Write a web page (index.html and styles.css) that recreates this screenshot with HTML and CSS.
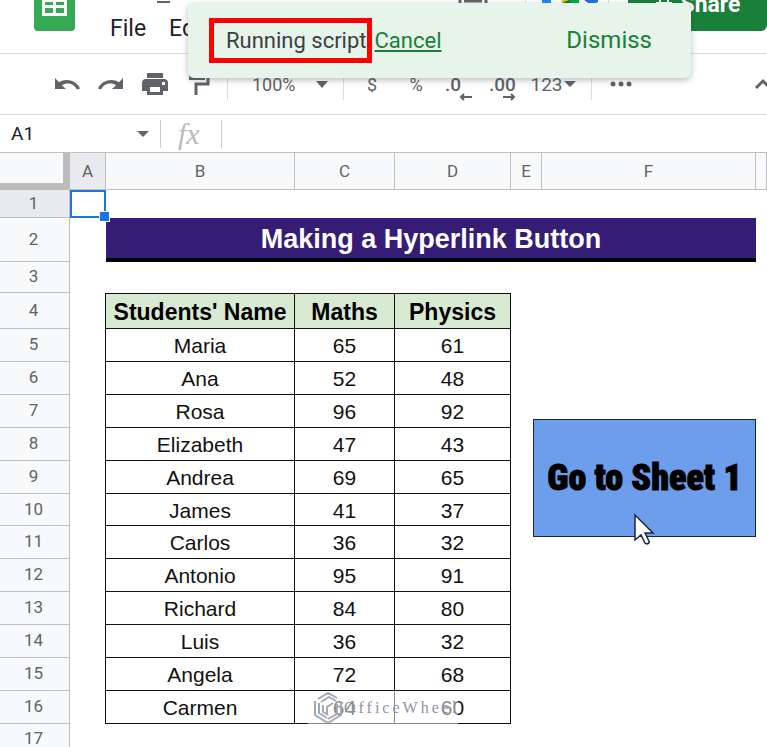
FILE: index.html
```html
<!DOCTYPE html>
<html lang="en">
<head>
<meta charset="utf-8">
<title>Spreadsheet</title>
<link rel="stylesheet" href="styles.css">
</head>
<body>
<div class="app">
  <header class="header">
    <svg class="logo" width="41" height="56" viewBox="0 0 41 56" aria-hidden="true">
      <rect width="41" height="56" rx="4" fill="#34a853"/>
      <path d="M8 16h25v25H8z" fill="#fff"/>
      <path d="M11 19h8v5h-8zM22 19h8v5h-8zM11 27h8v3h-8zM22 27h8v3h-8zM11 33h8v5h-8zM22 33h8v5h-8z" fill="#34a853"/>
    </svg>
    <div class="titles">
      <span class="title-mark"></span>
      <nav class="menu"><a href="#">File</a><a href="#">Edit</a></nav>
    </div>
    <div class="actions">
      <svg class="comments" width="30" height="56" viewBox="0 0 30 56" aria-hidden="true">
        <path d="M2 8v20M28 8v20M6 26h18" fill="none" stroke="#5f6368" stroke-width="3"/>
      </svg>
      <span class="top-sep"></span>
      <svg class="meet" width="57" height="56" viewBox="0 0 57 56" aria-hidden="true">
        <path d="M1 10h9v18H1z" fill="#2684fc"/>
        <path d="M21 10h17v18H21z" fill="#00832d"/>
        <path d="M29 10h9v18h-9z" fill="#00ac47"/>
        <path d="M21 22l7 3-7 3z" fill="#ffba00"/>
        <circle cx="51" cy="20" r="9" fill="#1a73e8"/>
      </svg>
      <span class="top-sep top-sep-wide"></span>
      <button class="share" type="button">
        <svg width="18" height="20" viewBox="0 0 18 20" aria-hidden="true">
          <path d="M1 8h16v9H1z" fill="#fff"/><path d="M5 8V5a4 4 0 0 1 8 0v3" fill="none" stroke="#fff" stroke-width="2"/>
        </svg>Share</button>
    </div>
  </header>

  <div class="toolbar" role="toolbar">
    <button class="tool" type="button" aria-label="Undo">
      <svg width="26" height="14" viewBox="0 0 26 14"><path d="M1 1v11h11L8 8.400c4-3.400 12-2.400 15 4.200l3-1.200C22 3 12 1 5 5.200z" fill="#5f6368"/></svg>
    </button>
    <button class="tool" type="button" aria-label="Redo">
      <svg width="26" height="14" viewBox="0 0 26 14"><path d="M25 1v11H14l4-3.600C14 5 6 6 3 12.600L0 11.400C4 3 14 1 21 5.200z" fill="#5f6368"/></svg>
    </button>
    <button class="tool" type="button" aria-label="Print">
      <svg width="26" height="24" viewBox="0 0 26 24"><path d="M5 1h16v5H5zM4 7h18a4 4 0 0 1 4 4v8h-5v4H5v-4H0v-8a4 4 0 0 1 4-4zm4 8v5h10v-5zM20 10v3h3v-3z" fill="#5f6368" fill-rule="evenodd"/></svg>
    </button>
    <button class="tool" type="button" aria-label="Paint format">
      <svg width="22" height="24" viewBox="0 0 22 24"><path d="M1 1h16v7H1z" fill="#5f6368"/><path d="M16 4h4v8H8v11" fill="none" stroke="#5f6368" stroke-width="3"/></svg>
    </button>
    <span class="sep sep-first"></span>
    <label class="zoom">
      <select aria-label="Zoom"><option>100%</option></select>
      <svg width="12" height="7" viewBox="0 0 12 7"><path d="M0 0h12L6 7z" fill="#5f6368"/></svg>
    </label>
    <span class="sep sep-second"></span>
    <button class="tool" type="button">$</button>
    <button class="tool" type="button">%</button>
    <button class="tool decimals" type="button"><span>.0</span>
      <svg width="13" height="8" viewBox="0 0 13 8"><path d="M13 4H3M5 1L2 4l3 3" fill="none" stroke="#5f6368" stroke-width="2"/></svg>
    </button>
    <button class="tool decimals" type="button"><span>.00</span>
      <svg width="13" height="8" viewBox="0 0 13 8"><path d="M0 4h10M8 1l3 3-3 3" fill="none" stroke="#5f6368" stroke-width="2"/></svg>
    </button>
    <button class="tool number" type="button">123
      <svg width="12" height="6" viewBox="0 0 12 6"><path d="M0 0h12L6 6z" fill="#5f6368"/></svg>
    </button>
    <span class="sep sep-third"></span>
    <button class="tool" type="button" aria-label="More">
      <svg width="22" height="6" viewBox="0 0 22 6" fill="#5f6368"><circle cx="3" cy="3" r="2.500"/><circle cx="11" cy="3" r="2.500"/><circle cx="19" cy="3" r="2.500"/></svg>
    </button>
    <button class="collapse" type="button" aria-label="Hide the menus">
      <svg width="18" height="12" viewBox="0 0 18 12"><path d="M2 10l7-7 7 7" fill="none" stroke="#5f6368" stroke-width="3"/></svg>
    </button>
  </div>

  <div class="formula-bar">
    <input class="name-box" aria-label="Name box" value="A1">
    <svg class="name-caret" width="12" height="6" viewBox="0 0 12 6"><path d="M0 0h12L6 6z" fill="#5f6368"/></svg>
    <span class="bar-sep"></span>
    <span class="fx">fx</span>
    <span class="bar-sep"></span>
    <input class="formula" aria-label="Formula">
  </div>

  <main class="sheet">
    <table class="grid">
      <colgroup>
        <col class="c-num"><col class="c-a"><col class="c-b"><col class="c-c"><col class="c-d"><col class="c-e"><col class="c-f"><col>
      </colgroup>
      <thead>
        <tr><th class="corner"></th><th class="active">A</th><th>B</th><th>C</th><th>D</th><th>E</th><th>F</th><th></th></tr>
      </thead>
      <tbody>
        <tr class="r-first"><th class="active">1</th><td class="selected"><span class="handle"></span></td><td colspan="6"></td></tr>
        <tr class="r-title"><th>2</th><td></td><td class="banner" colspan="5">Making a Hyperlink Button</td><td></td></tr>
        <tr class="r-gap"><th>3</th><td colspan="7"></td></tr>
        <tr class="r-head"><th>4</th><td class="edge"></td><td>Students' Name</td><td>Maths</td><td>Physics</td></tr>
        <tr class="r-data"><th>5</th><td class="edge"></td><td>Maria</td><td>65</td><td>61</td></tr>
        <tr class="r-data"><th>6</th><td class="edge"></td><td>Ana</td><td>52</td><td>48</td></tr>
        <tr class="r-data"><th>7</th><td class="edge"></td><td>Rosa</td><td>96</td><td>92</td></tr>
        <tr class="r-data"><th>8</th><td class="edge"></td><td>Elizabeth</td><td>47</td><td>43</td></tr>
        <tr class="r-data"><th>9</th><td class="edge"></td><td>Andrea</td><td>69</td><td>65</td></tr>
        <tr class="r-data r-short"><th>10</th><td class="edge"></td><td>James</td><td>41</td><td>37</td></tr>
        <tr class="r-data"><th>11</th><td class="edge"></td><td>Carlos</td><td>36</td><td>32</td></tr>
        <tr class="r-data"><th>12</th><td class="edge"></td><td>Antonio</td><td>95</td><td>91</td></tr>
        <tr class="r-data"><th>13</th><td class="edge"></td><td>Richard</td><td>84</td><td>80</td></tr>
        <tr class="r-data"><th>14</th><td class="edge"></td><td>Luis</td><td>36</td><td>32</td></tr>
        <tr class="r-data"><th>15</th><td class="edge"></td><td>Angela</td><td>72</td><td>68</td></tr>
        <tr class="r-data"><th>16</th><td class="edge"></td><td>Carmen</td><td>64</td><td>60</td></tr>
        <tr class="r-gap"><th>17</th><td colspan="7"></td></tr>
      </tbody>
    </table>
    <button class="go" type="button">Go to Sheet 1</button>
    <svg class="pointer" width="22" height="34" viewBox="0 0 22 34" aria-hidden="true">
      <path d="M2 2v25l6-5 4 8c2 2 5 0 4-2l-4-8h8z" fill="#fff" stroke="#1d2440" stroke-width="1.500"/>
    </svg>
    <div class="watermark">
      <svg width="30" height="32" viewBox="0 0 30 32" fill="none" stroke="#a3a8b5" stroke-width="2">
        <path d="M5 7l10-6 9 5M8 10l8-5 7 4M28 9v14l-5 3M24 12v10l-9 5M2 9v14l13 8 8-5M6 11v10l8 5M10 13v7l5 3M20 11l-6 4v8"/>
      </svg>
      <span>OfficeWheel</span>
    </div>
  </main>

  <div class="toast" role="status">
    <span class="running">Running script</span>
    <a class="cancel" href="#">Cancel</a>
    <button class="dismiss" type="button">Dismiss</button>
  </div>
</div>
</body>
</html>
```
FILE: styles.css
```css
* { box-sizing: border-box; }
body { margin: 0; background: #fff; color: #202124; font-family: Roboto, "Liberation Sans", sans-serif; }
button, input, select { font: inherit; color: inherit; border: 0; padding: 0; margin: 0; background: none; }
svg { display: block; flex: none; }

.app { position: relative; display: flex; flex-direction: column; height: 100vh; overflow: hidden; }

.header { display: flex; align-items: flex-end; flex: none; height: 54px; padding-left: 34px; overflow: hidden; border-bottom: 1px solid #dadce0; }
.logo { margin-bottom: 22px; }
.titles { margin-left: 35px; }
.title-mark { display: block; width: 13px; height: 2px; margin: 0 0 13px 47px; background: #5f6368; }
.menu { display: flex; gap: 23px; padding-bottom: 11px; font-size: 23px; line-height: 26px; }
.menu a { color: #202124; text-decoration: none; }
.actions { display: flex; align-items: flex-end; margin-left: auto; padding-bottom: 22px; }
.top-sep { width: 1px; height: 56px; margin: 0 15px 0 37px; background: #dadce0; }
.top-sep-wide { margin: 0 19px 0 10px; }
.share { display: flex; justify-content: center; align-items: center; gap: 8px; width: 139px; height: 56px; padding-top: 2px; border-radius: 6px; background: #188038; color: #fff; font-size: 23px; font-weight: 700; }

.toolbar { display: flex; align-items: center; flex: none; height: 61px; padding-left: 45px; overflow: hidden; border-bottom: 1px solid #dadce0; color: #5f6368; font-size: 18px; }
.tool { display: flex; justify-content: center; align-items: center; flex: none; width: 44px; height: 32px; }
.decimals { position: relative; justify-content: flex-start; padding-left: 7px; font-size: 19px; font-weight: 500; }
.decimals svg { position: absolute; right: 10px; bottom: -1px; }
.number { gap: 1px; width: 54px; font-size: 19px; }
.sep { flex: none; width: 1px; height: 32px; background: #dadce0; }
.sep-first { margin-left: 6px; }
.sep-second { margin-right: 6px; }
.sep-third { margin: 0 7px 0 11px; }
.zoom { display: flex; align-items: center; flex: none; width: 115px; padding-left: 24px; }
.zoom select { appearance: none; width: 64px; }
.collapse { flex: none; margin: 0 -5px 0 auto; }

.formula-bar { display: flex; align-items: center; flex: none; height: 38px; border-bottom: 1px solid #c0c0c0; }
.name-box { width: 137px; padding-left: 11px; font-size: 19px; }
.name-caret { margin-right: 11px; }
.bar-sep { flex: none; width: 1px; height: 28px; background: #ccc; }
.fx { width: 60px; padding-left: 17px; color: #bbb; font: italic 30px/28px "Liberation Serif", serif; }
.formula { flex: 1; min-width: 0; }

.sheet { position: relative; flex: 1; min-height: 0; overflow: hidden; }
.grid { width: 100%; table-layout: fixed; border-collapse: separate; border-spacing: 0; }
.c-num { width: 70px; }
.c-a { width: 36px; }
.c-b { width: 189px; }
.c-c { width: 100px; }
.c-d { width: 116px; }
.c-e { width: 31px; }
.c-f { width: 214px; }
.grid th, .grid td { padding: 0; text-align: center; line-height: 24px; }
.grid th { border: 0 solid #c0c0c0; border-width: 0 1px 1px 0; background: #f8f9fa; color: #5f6368; font-size: 17px; font-weight: 400; }
.grid tbody th { padding: 0 2px 2px 0; }
.grid thead th { height: 37px; }
.grid .corner { border: solid #bdbdbd; border-width: 0 7px 7px 0; }
.grid .active { background: #e8eaed; }
.grid td { font-family: "Liberation Sans", Arial, sans-serif; font-size: 21px; color: #111; }
.r-first { height: 28px; }
.r-title { height: 44px; }
.r-gap { height: 31px; }
.r-head { height: 36px; }
.r-data { height: 33px; }
.r-short { height: 32px; }
.grid .selected { position: relative; border: 2px solid #1a73e8; }
.handle { position: absolute; right: -6px; bottom: -6px; width: 11px; height: 11px; border: 1px solid #fff; background: #1a73e8; }
.grid .banner { padding-top: 2px; border-bottom: 4px solid #000; background: #351c75; color: #fff; font-size: 27px; font-weight: 700; }
.grid .r-head td, .grid .r-data td { padding-top: 2px; border: 0 solid #111; border-width: 0 1px 1px 0; }
.grid .r-head td { border-top-width: 1px; background: #d9ead3; font-size: 23px; font-weight: 700; color: #000; }
.grid .r-head .edge, .grid .r-data .edge { border-width: 0 1px 0 0; background: none; }

.go { position: absolute; left: 533px; top: 266px; width: 223px; height: 118px; border: 1px solid #1d2436; background: #6d9eeb; color: #000; font: 900 36px/40px Impact, "Roboto Condensed", Roboto, "Liberation Sans", sans-serif; white-space: nowrap; -webkit-text-stroke: 1px #000; }
.pointer { position: absolute; left: 633px; top: 360px; }
.watermark { position: absolute; left: 308px; top: 538px; display: flex; align-items: center; gap: 1px; width: 150px; height: 34px; padding-left: 5px; background: rgba(255, 255, 255, .5); color: #8d93a3; font: 16px/20px "Liberation Serif", serif; letter-spacing: 3px; }

.toast { position: absolute; left: 188px; top: 3px; display: flex; align-items: center; width: 503px; height: 75px; padding: 0 39px 0 21px; border-radius: 6px; background: #e6f4ea; box-shadow: 0 2px 6px rgba(60, 64, 67, .35); font-size: 22px; line-height: 35px; }
.running { padding: 0 0 0 12px; border: 5px solid #f00; color: #3c4043; white-space: nowrap; }
.cancel { margin-left: 3px; color: #188038; }
.dismiss { margin-left: auto; color: #188038; font-size: 24px; }
```
